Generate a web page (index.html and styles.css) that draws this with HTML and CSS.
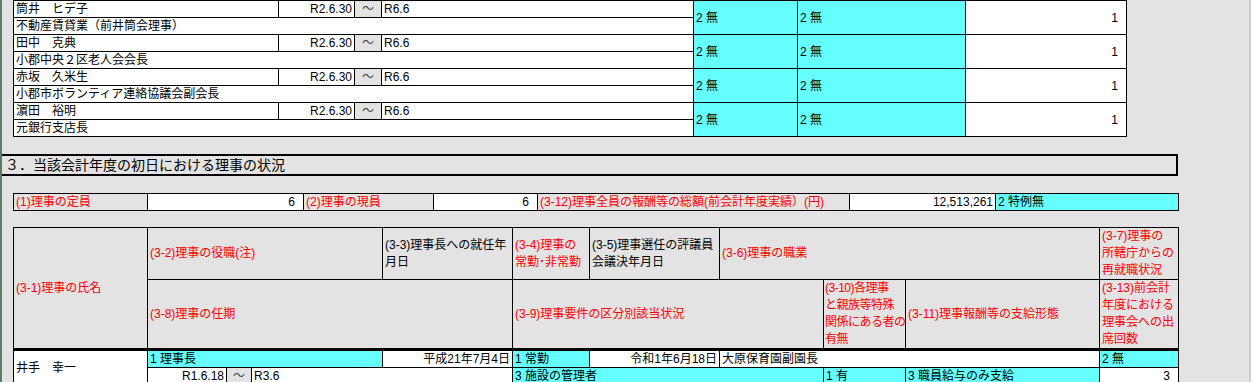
FILE: index.html
```html
<!DOCTYPE html>
<html lang="ja">
<head>
<meta charset="utf-8">
<title>理事の状況</title>
<link rel="stylesheet" href="styles.css">
</head>
<body>
<div class="sheet">
  <table class="grid members">
    <colgroup>
      <col style="width:265px"><col style="width:76px"><col style="width:27px"><col style="width:312px"><col style="width:104px"><col style="width:168px"><col style="width:161px">
    </colgroup>
    <tr class="r17">
      <td>筒井　ヒデ子</td><td class="right">R2.6.30</td><td class="tilde">～</td><td class="after-tilde">R6.6</td>
      <td class="cyan" rowspan="2">2 無</td><td class="cyan" rowspan="2">2 無</td><td class="right num" rowspan="2">1</td>
    </tr>
    <tr class="r17"><td colspan="4">不動産賃貸業（前井筒会理事）</td></tr>
    <tr class="r17">
      <td>田中　克典</td><td class="right">R2.6.30</td><td class="tilde">～</td><td class="after-tilde">R6.6</td>
      <td class="cyan" rowspan="2">2 無</td><td class="cyan" rowspan="2">2 無</td><td class="right num" rowspan="2">1</td>
    </tr>
    <tr class="r17"><td colspan="4">小郡中央２区老人会会長</td></tr>
    <tr class="r17">
      <td>赤坂　久米生</td><td class="right">R2.6.30</td><td class="tilde">～</td><td class="after-tilde">R6.6</td>
      <td class="cyan" rowspan="2">2 無</td><td class="cyan" rowspan="2">2 無</td><td class="right num" rowspan="2">1</td>
    </tr>
    <tr class="r17"><td colspan="4">小郡市ボランティア連絡協議会副会長</td></tr>
    <tr class="r17">
      <td>濵田　裕明</td><td class="right">R2.6.30</td><td class="tilde">～</td><td class="after-tilde">R6.6</td>
      <td class="cyan" rowspan="2">2 無</td><td class="cyan" rowspan="2">2 無</td><td class="right num" rowspan="2">1</td>
    </tr>
    <tr class="r17"><td colspan="4">元銀行支店長</td></tr>
  </table>

  <div class="section-title">３．当該会計年度の初日における理事の状況</div>

  <table class="grid summary">
    <colgroup>
      <col style="width:134px"><col style="width:156px"><col style="width:130px"><col style="width:104px"><col style="width:312px"><col style="width:146px"><col style="width:183px">
    </colgroup>
    <tr class="r17">
      <td class="head red">(1)理事の定員</td><td class="white right num">6</td>
      <td class="head red">(2)理事の現員</td><td class="white right num">6</td>
      <td class="head red">(3-12)理事全員の報酬等の総額(前会計年度実績）(円)</td><td class="white right">12,513,261</td>
      <td class="cyan">2 特例無</td>
    </tr>
  </table>

  <table class="grid officers">
    <colgroup>
      <col style="width:134px"><col style="width:79px"><col style="width:25px"><col style="width:131px"><col style="width:130px"><col style="width:77px"><col style="width:130px"><col style="width:104px"><col style="width:82px"><col style="width:194px"><col style="width:79px">
    </colgroup>
    <tr class="h1">
      <td class="head red" rowspan="2">(3-1)理事の氏名</td>
      <td class="head red" colspan="3">(3-2)理事の役職(注)</td>
      <td class="head">(3-3)理事長への就任年<br>月日</td>
      <td class="head red">(3-4)理事の<br>常勤･非常勤</td>
      <td class="head">(3-5)理事選任の評議員<br>会議決年月日</td>
      <td class="head red" colspan="3">(3-6)理事の職業</td>
      <td class="head red">(3-7)理事の<br>所轄庁からの<br>再就職状況</td>
    </tr>
    <tr class="h2">
      <td class="head red" colspan="4">(3-8)理事の任期</td>
      <td class="head red" colspan="3">(3-9)理事要件の区分別該当状況</td>
      <td class="head red tight">(3-10)各理事<br>と親族等特殊<br>関係にある者の<br>有無</td>
      <td class="head red">(3-11)理事報酬等の支給形態</td>
      <td class="head red">(3-13)前会計<br>年度における<br>理事会への出<br>席回数</td>
    </tr>
    <tr class="d1">
      <td class="white" rowspan="2">井手　幸一</td>
      <td class="cyan" colspan="3">1 理事長</td>
      <td class="white right">平成21年7月4日</td>
      <td class="cyan">1 常勤</td>
      <td class="white right">令和1年6月18日</td>
      <td class="white" colspan="3">大原保育園副園長</td>
      <td class="cyan">2 無</td>
    </tr>
    <tr class="d2">
      <td class="white right">R1.6.18</td>
      <td class="tilde">～</td>
      <td class="white after-tilde" colspan="2">R3.6</td>
      <td class="cyan" colspan="3">3 施設の管理者</td>
      <td class="cyan">1 有</td>
      <td class="cyan">3 職員給与のみ支給</td>
      <td class="white right num">3</td>
    </tr>
  </table>
</div>
</body>
</html>
```

FILE: styles.css
```css
* {
  box-sizing: border-box;
}

html,
body {
  margin: 0;
  padding: 0;
  height: 382px;
  overflow: hidden;
}

body {
  background: #e3e3e3;
  font-family: "Liberation Sans", "Noto Sans CJK JP", sans-serif;
  font-size: 12px;
  color: #000;
}

.sheet {
  width: 1251px;
  height: 382px;
  border-left: 2px solid #5e7c5f;
  border-right: 2px solid #cfcfcf;
}

.grid {
  border-collapse: collapse;
  table-layout: fixed;
  margin-left: 11px;
  background: #fff;
}

.grid td {
  border: 1px solid #000;
  padding: 0 2px;
  white-space: nowrap;
  overflow: hidden;
  line-height: 16px;
  vertical-align: middle;
}

.members {
  width: 1113px;
}

.r17 {
  height: 17px;
}

.right {
  text-align: right;
}

.num {
  padding-right: 8px !important;
}

.tilde {
  background: #e3e3e3;
  text-align: center;
  color: #444;
  padding: 0 !important;
}

.members .tilde,
.officers .tilde {
  border-left: 1px solid #bdbdbd;
}

.cyan {
  background: #66ffff;
}

.white {
  background: #fff;
}

.head {
  background: #e3e3e3;
}

.red {
  color: #ff0000;
}

.grid td.tight {
  padding: 0 0 0 1px;
  letter-spacing: -0.5px;
}

.section-title {
  width: 1176px;
  height: 22px;
  margin-top: 17px;
  border: 2px solid #000;
  border-left: none;
  font-size: 14px;
  line-height: 18px;
  padding-left: 3px;
}

.summary {
  width: 1165px;
  margin-top: 17px;
}

.officers {
  width: 1165px;
  margin-top: 16px;
}

.officers .h1 {
  height: 51px;
}

.officers .h2 {
  height: 68px;
}

.officers .h2 td,
.officers .h1 td[rowspan] {
  border-bottom: 3px solid #000;
}

.officers .head {
  line-height: 17px;
}

.officers .d1,
.officers .d2 {
  height: 17px;
}
```
